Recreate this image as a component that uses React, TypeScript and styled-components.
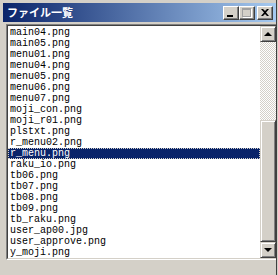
import React from 'react';
import styled, { createGlobalStyle } from 'styled-components';

const files = [
  'main04.png',
  'main05.png',
  'menu01.png',
  'menu04.png',
  'menu05.png',
  'menu06.png',
  'menu07.png',
  'moji_con.png',
  'moji_r01.png',
  'plstxt.png',
  'r_menu02.png',
  'r_menu.png',
  'raku_io.png',
  'tb06.png',
  'tb07.png',
  'tb08.png',
  'tb09.png',
  'tb_raku.png',
  'user_ap00.jpg',
  'user_approve.png',
  'y_moji.png',
];

const selectedFile = 'r_menu.png';

const GlobalStyle = createGlobalStyle`
  html, body {
    margin: 0;
    padding: 0;
    background: #d4d0c8;
  }
`;

const Window = styled.div`
  width: 278px;
  height: 275px;
  box-sizing: border-box;
  padding: 3px 2px 0 3px;
  background: #d4d0c8;
  box-shadow: inset -1px 0 #d4d0c8, inset -2px 0 #404040;
  overflow: hidden;
`;

const TitleBar = styled.div`
  display: flex;
  align-items: center;
  height: 19px;
  padding: 0 3px 0 4px;
  background: linear-gradient(to right, #0a246a, #a6caf0);
`;

const Title = styled.span`
  flex: 1;
  color: #fff;
  font-family: 'Noto Sans CJK JP', sans-serif;
  font-weight: bold;
  font-size: 11px;
  line-height: 19px;
`;

const Caption = styled.div`
  display: flex;
`;

const CaptionButton = styled.div<{ gap?: boolean }>`
  width: 16px;
  height: 14px;
  box-sizing: border-box;
  margin-left: ${(p) => (p.gap ? '2px' : '0')};
  background: #d4d0c8;
  border: 1px solid;
  border-color: #fff #404040 #404040 #fff;
  box-shadow: inset -1px -1px #808080;
  display: flex;
  align-items: center;
  justify-content: center;
`;

const MinBar = styled.div`
  width: 6px;
  height: 2px;
  background: #000;
  margin-top: 6px;
  margin-right: 2px;
`;

const MaxBox = styled.div`
  width: 9px;
  height: 9px;
  box-sizing: border-box;
  border: 1px solid #a0a0a0;
  border-top-width: 2px;
  box-shadow: 1px 1px #fff;
  margin-right: 1px;
`;

const Client = styled.div`
  margin-top: 2px;
  margin-left: 3px;
`;

const ListFrame = styled.div`
  border-top: 1px solid #808080;
  border-left: 1px solid #808080;
  border-bottom: 1px solid #fff;
`;

const ListInner = styled.div`
  display: flex;
  height: 232px;
  border-top: 1px solid #404040;
  border-left: 1px solid #404040;
  border-bottom: 1px solid #d4d0c8;
  background: #fff;
`;

const Items = styled.div`
  flex: 1;
  overflow: hidden;
  padding-top: 1px;
`;

const Item = styled.div<{ selected?: boolean }>`
  height: 11px;
  line-height: 11px;
  padding-left: 2px;
  font-family: 'Liberation Mono', monospace;
  font-size: 10px;
  white-space: nowrap;
  color: ${(p) => (p.selected ? '#fff' : '#000')};
  background: ${(p) => (p.selected ? '#0a246a' : 'transparent')};
  outline: ${(p) => (p.selected ? '1px dotted #d4d0c8' : 'none')};
  outline-offset: -1px;
`;

const ScrollBar = styled.div`
  width: 16px;
  display: flex;
  flex-direction: column;
`;

const ScrollButton = styled.div`
  width: 16px;
  height: 16px;
  flex: none;
  box-sizing: border-box;
  background: #d4d0c8;
  border: 1px solid;
  border-color: #d4d0c8 #404040 #404040 #d4d0c8;
  box-shadow: inset 1px 1px #fff, inset -1px -1px #808080;
  display: flex;
  align-items: center;
  justify-content: center;
`;

const Arrow = styled.div<{ down?: boolean }>`
  width: 0;
  height: 0;
  border-left: 4px solid transparent;
  border-right: 4px solid transparent;
  ${(p) => (p.down ? 'border-top: 4px solid #000;' : 'border-bottom: 4px solid #000;')}
`;

const Track = styled.div`
  flex: 1;
  background: repeating-conic-gradient(#fff 0 25%, #d4d0c8 0 50%) 0 0 / 2px 2px;
`;

const Thumb = styled(ScrollButton)`
  height: 122px;
`;

export default function App() {
  return (
    <>
      <GlobalStyle />
      <Window>
        <TitleBar>
          <Title>ファイル一覧</Title>
          <Caption>
            <CaptionButton>
              <MinBar />
            </CaptionButton>
            <CaptionButton>
              <MaxBox />
            </CaptionButton>
            <CaptionButton gap>
              <svg width="8" height="7" viewBox="0 0 8 7">
                <path d="M0 0h2l2 2 2-2h2L5 3.5 8 7H6L4 5 2 7H0l3-3.5z" fill="#000" />
              </svg>
            </CaptionButton>
          </Caption>
        </TitleBar>
        <Client>
          <ListFrame>
            <ListInner>
              <Items>
                {files.map((f) => (
                  <Item key={f} selected={f === selectedFile}>
                    {f}
                  </Item>
                ))}
              </Items>
              <ScrollBar>
                <ScrollButton>
                  <Arrow />
                </ScrollButton>
                <Track />
                <Thumb />
                <ScrollButton>
                  <Arrow down />
                </ScrollButton>
              </ScrollBar>
            </ListInner>
          </ListFrame>
        </Client>
      </Window>
    </>
  );
}
